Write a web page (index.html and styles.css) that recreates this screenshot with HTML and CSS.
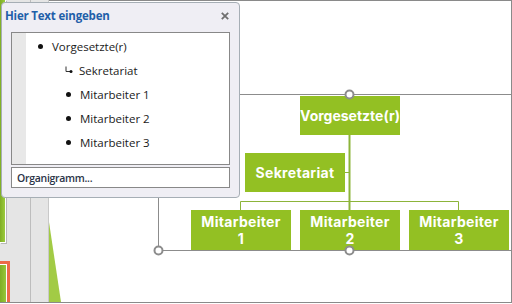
FILE: index.html
```html
<!DOCTYPE html>
<html lang="de">
<head>
<meta charset="utf-8">
<title>SmartArt Organigramm</title>
<link rel="stylesheet" href="styles.css">
</head>
<body>
<div class="app">
  <aside class="sidebar">
    <div class="thumbs">
      <div class="thumb thumb-a"></div>
      <div class="thumb thumb-b"></div>
    </div>
    <div class="gutter"></div>
  </aside>

  <main class="canvas">
    <div class="node boss">Vorgesetzte(r)</div>
    <div class="node sek">Sekretariat</div>
    <div class="node m1"><span class="ln">Mitarbeiter</span><span class="ln">1</span></div>
    <div class="node m2"><span class="ln">Mitarbeiter</span><span class="ln">2</span></div>
    <div class="node m3"><span class="ln">Mitarbeiter</span><span class="ln">3</span></div>
    <svg class="wires" width="462" height="301" viewBox="0 0 462 301">
      <polygon class="deco" points="0,221 12,301 0,301"/>
      <path class="frame" d="M109.5 93.5 H463 M109.5 249.5 H463 M109.5 93.5 V249.5"/>
      <path class="conn" d="M300.5 134 V209"/>
      <path class="conn thin" d="M296 171.5 H300.5 M191.5 209 V200.5 H409.5 V209"/>
      <circle class="handle" cx="300.5" cy="93.5" r="4"/>
      <circle class="handle" cx="109.5" cy="249.5" r="4"/>
      <circle class="handle" cx="300.5" cy="249.5" r="4"/>
    </svg>
  </main>

  <section class="pane">
    <header class="pane-head">
      <h1 class="pane-title">Hier Text eingeben</h1>
      <svg class="close" width="8" height="8" viewBox="0 0 8 8"><path d="M0.8 0.8 L7.2 7.2 M7.2 0.8 L0.8 7.2"/></svg>
    </header>
    <div class="editor">
      <div class="strip"></div>
      <ul class="items">
        <li class="item lvl1"><span class="dot"></span><span>Vorgesetzte(r)</span></li>
        <li class="item lvl2 assist"><svg class="arrow" width="8" height="8" viewBox="0 0 8 8"><path d="M1 0.5 V5.5 H5"/><circle cx="6" cy="5.5" r="1.5"/></svg><span>Sekretariat</span></li>
        <li class="item lvl2"><span class="dot"></span><span>Mitarbeiter 1</span></li>
        <li class="item lvl2"><span class="dot"></span><span>Mitarbeiter 2</span></li>
        <li class="item lvl2"><span class="dot"></span><span>Mitarbeiter 3</span></li>
      </ul>
    </div>
    <div class="footer-box">Organigramm...</div>
  </section>
</div>
</body>
</html>
```
FILE: styles.css
```css
html, body {
  margin: 0;
  padding: 0;
  background: #ffffff;
}

.app {
  position: relative;
  width: 512px;
  height: 303px;
  box-sizing: border-box;
  border-bottom: 1px solid #8a8a8a;
  display: flex;
  font-family: "Open Sans", "Noto Sans", sans-serif;
}

/* left slide rail */
.sidebar {
  width: 49px;
  display: flex;
  background: #e5e5e5;
}
.thumbs {
  width: 30px;
  border-right: 1px solid #bdbdbd;
  display: flex;
  flex-direction: column;
}
.gutter {
  width: 17px;
  border-right: 1px solid #c9c9c9;
}
.thumb-a {
  width: 5px;
  height: 242px;
  background: linear-gradient(90deg, #7fae24, #9ccb3e);
  border-right: 1px solid #ffffff;
  border-bottom: 1px solid #ffffff;
  box-shadow: 1px 1px 0 #b8b8b8;
}
.thumb-b {
  margin-top: 18px;
  width: 7px;
  flex: 1;
  border: 3px solid #ec6a48;
  border-left: none;
  border-bottom: none;
  background: linear-gradient(90deg, #7fae24, #9ccb3e);
  box-shadow: inset -1px 1px 0 #ffffff;
}

/* slide canvas */
.canvas {
  position: relative;
  flex: 1;
  border-top: 1px solid #8a8a8a;
  border-right: 1px solid #8a8a8a;
  background: #ffffff;
}
.wires {
  position: absolute;
  left: 0;
  top: 0;
}
.deco {
  fill: #a2cb45;
}
.frame {
  fill: none;
  stroke: #8c8c8c;
  stroke-width: 1;
}
.conn {
  fill: none;
  stroke: #8cb43a;
  stroke-width: 2;
}
.conn.thin {
  stroke-width: 1;
}
.handle {
  fill: #ffffff;
  stroke: #8c8c8c;
  stroke-width: 2;
}

.node {
  position: absolute;
  width: 100px;
  height: 39px;
  background: #93c023;
  color: #ffffff;
  font-family: Inter, "Open Sans", sans-serif;
  font-weight: 700;
  font-size: 14px;
  line-height: 17px;
  letter-spacing: 0.3px;
  display: flex;
  flex-direction: column;
  align-items: center;
  justify-content: center;
  text-align: center;
  white-space: nowrap;
}
.ln {
  display: block;
  height: 17px;
}
.boss { left: 251px; top: 95px; letter-spacing: 0; }
.sek  { left: 196px; top: 152px; }
.m1, .m2, .m3 { top: 209px; height: 40px; }
.m1 { left: 142px; }
.m2 { left: 251px; }
.m3 { left: 360px; }

/* text pane */
.pane {
  position: absolute;
  left: 1px;
  top: 2px;
  width: 239px;
  height: 196px;
  box-sizing: border-box;
  border: 1px solid #a6aeb5;
  border-radius: 4px;
  background: #efeef4;
  display: flex;
  flex-direction: column;
  padding: 0 9px 0 9px;
}
.pane-head {
  height: 29px;
  display: flex;
  align-items: center;
  justify-content: space-between;
  margin-left: -6px;
  margin-top: -2px;
  padding-right: 1px;
}
.pane-title {
  margin: 0;
  font-size: 11.5px;
  font-weight: 700;
  color: #1f5fa9;
  letter-spacing: -0.2px;
}
.close path {
  stroke: #6f6f6f;
  stroke-width: 1.8;
  fill: none;
}
.editor {
  height: 133px;
  box-sizing: border-box;
  border: 1px solid #888888;
  background: #ffffff;
  display: flex;
  margin-top: 2px;
}
.strip {
  width: 14px;
  background: #e8e8e8;
}
.items {
  list-style: none;
  margin: 0;
  padding: 1px 0 0 0;
  font-size: 11.5px;
  color: #1a1a1a;
}
.item {
  height: 24px;
  display: flex;
  align-items: center;
}
.dot {
  width: 5px;
  height: 5px;
  border-radius: 50%;
  background: #111111;
}
.lvl1 { padding-left: 12px; }
.lvl1 .dot { margin-right: 9px; }
.lvl2 { padding-left: 40px; }
.lvl2 .dot { margin-right: 9px; }
.assist { padding-left: 39px; }
.arrow { margin-right: 6px; }
.arrow path { fill: none; stroke: #333333; stroke-width: 1; }
.arrow circle { fill: #111111; }

.footer-box {
  margin-top: 2px;
  height: 21px;
  box-sizing: border-box;
  border: 1px solid #888888;
  background: #ffffff;
  font-size: 10.5px;
  font-weight: 600;
  letter-spacing: -0.3px;
  color: #2b3448;
  padding-left: 5px;
  display: flex;
  align-items: center;
}
```
